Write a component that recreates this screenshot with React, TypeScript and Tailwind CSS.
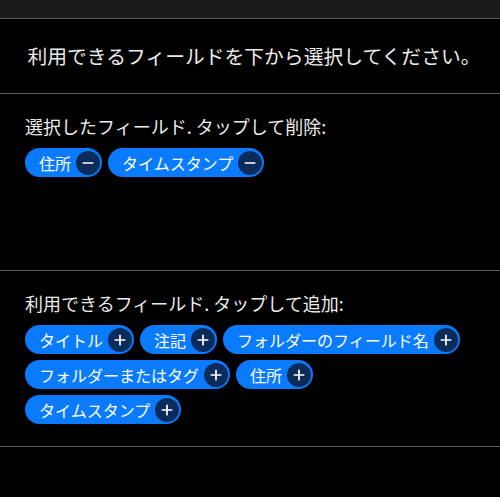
import { Plus, Minus } from "lucide-react";

const selected = ["住所", "タイムスタンプ"];
const available = [
  "タイトル",
  "注記",
  "フォルダーのフィールド名",
  "フォルダーまたはタグ",
  "住所",
  "タイムスタンプ",
];

function Chip({ label, mode }: { label: string; mode: "add" | "remove" }) {
  return (
    <button className="flex h-[29px] items-center gap-[5px] rounded-full bg-[#0a7bff] pl-[14px] pr-[2px] text-[16px] leading-none text-white">
      <span>{label}</span>
      <span className="flex h-[24px] w-[24px] items-center justify-center rounded-full bg-[#0b2c5a]">
        {mode === "add" ? (
          <Plus className="h-[16px] w-[16px]" strokeWidth={2.6} />
        ) : (
          <Minus className="h-[16px] w-[16px]" strokeWidth={2.6} />
        )}
      </span>
    </button>
  );
}

export default function App() {
  return (
    <div
      className="min-h-[497px] w-[500px] bg-black text-[#ececec]"
      style={{ fontFamily: '"Noto Sans CJK JP", "Noto Sans", sans-serif' }}
    >
      {/* Top bar */}
      <div className="h-[19px] border-b border-[#5c5c5c] bg-[#1b1b1b]" />

      {/* Header */}
      <div className="flex h-[75px] items-center justify-center border-b border-[#5c5c5c] pl-[8px] text-[19.8px]">
        利用できるフィールドを下から選択してください。
      </div>

      {/* Selected */}
      <div className="h-[177px] border-b border-[#5c5c5c] px-[25px] pt-[20px]">
        <div className="mb-[10px] text-[18px] leading-[24px]">
          選択したフィールド. タップして削除:
        </div>
        <div className="flex flex-wrap gap-x-[6px] gap-y-[6px]">
          {selected.map((s) => (
            <Chip key={s} label={s} mode="remove" />
          ))}
        </div>
      </div>

      {/* Available */}
      <div className="h-[176px] border-b border-[#5c5c5c] px-[25px] pt-[20px]">
        <div className="mb-[10px] text-[18px] leading-[24px]">
          利用できるフィールド. タップして追加:
        </div>
        <div className="flex flex-wrap gap-x-[6px] gap-y-[6px]">
          {available.map((s) => (
            <Chip key={s} label={s} mode="add" />
          ))}
        </div>
      </div>
    </div>
  );
}
